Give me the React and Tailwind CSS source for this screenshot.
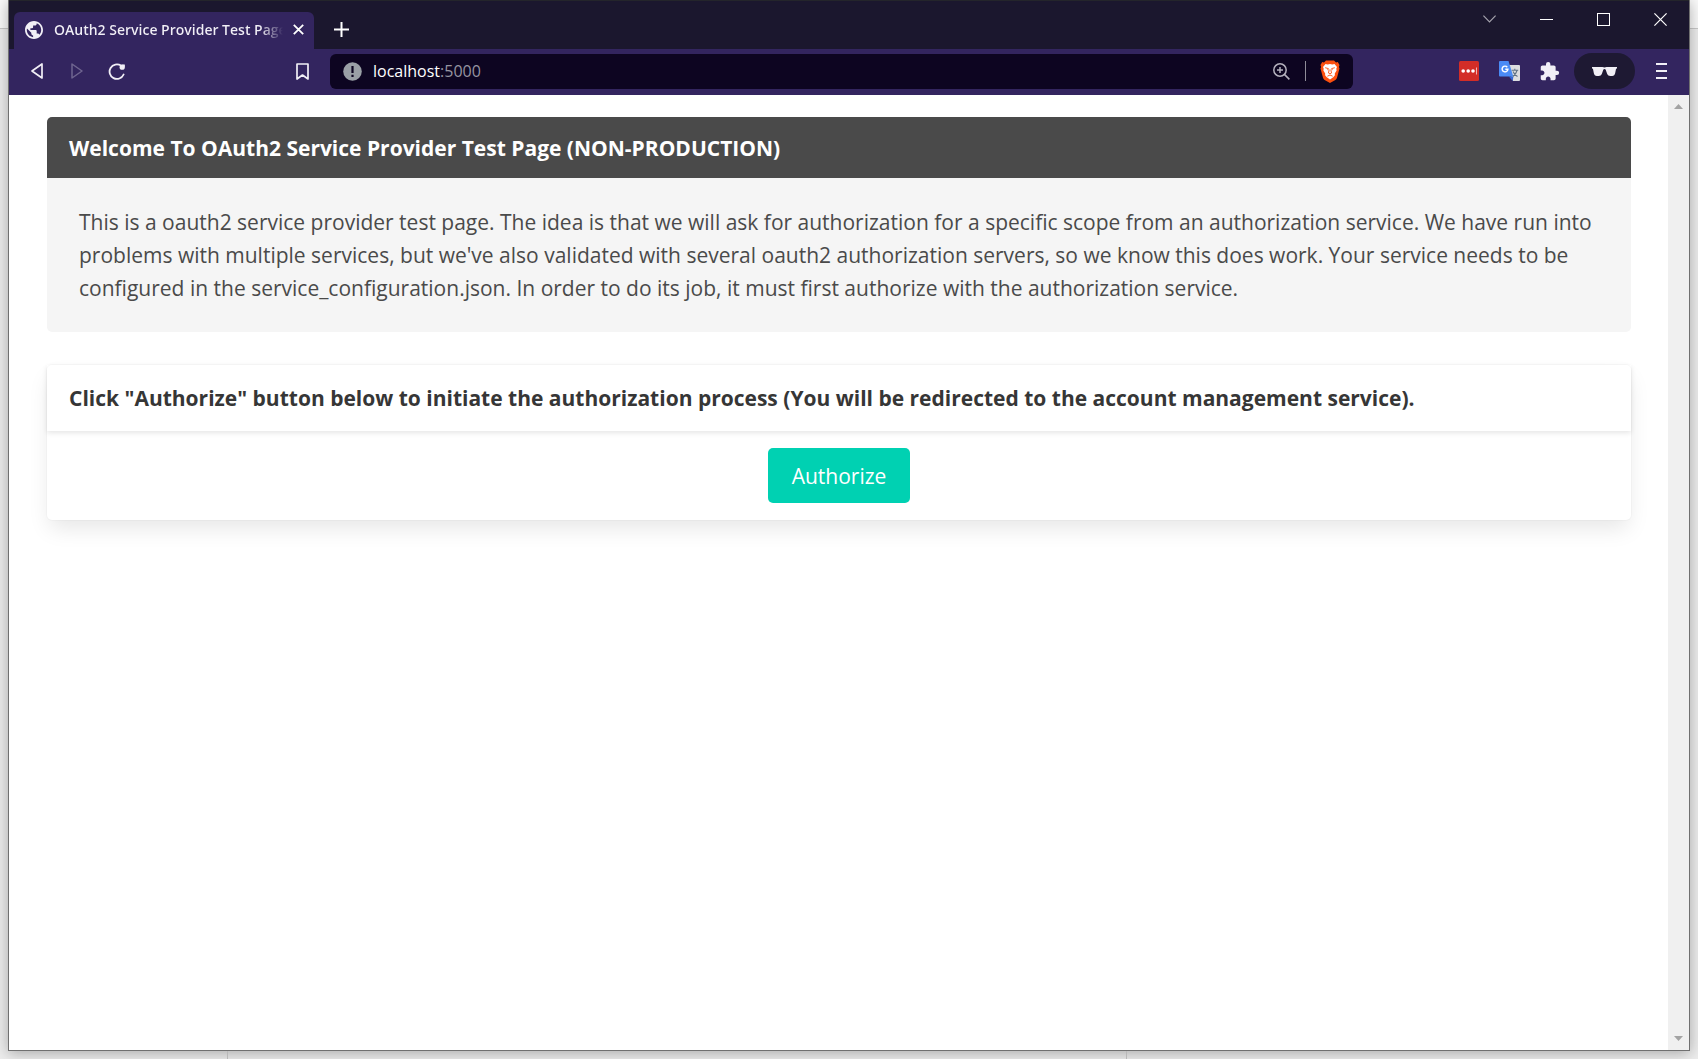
import React from "react";

function WindowButton({ label, children }) {
  return (
    <button type="button" aria-label={label} className="flex h-9 w-[57px] items-center justify-center">
      {children}
    </button>
  );
}

function TabStrip() {
  return (
    <div className="flex h-[49px] items-start justify-between border-t border-[#24252b] bg-[#1b172e] pl-[5px]">
      <div className="flex">
        <div className="mt-[11px] flex h-[37px] w-[300px] items-center rounded-t-md bg-[#33255f] pr-[6px] pb-[2px] pl-[11px]">
          <svg className="size-[18px] shrink-0" viewBox="2 2 20 20" fill="#f1eff6" aria-hidden="true">
            <path d="M12 2C6.480 2 2 6.480 2 12s4.480 10 10 10 10-4.480 10-10S17.520 2 12 2zm-1 17.930c-3.950-.49-7-3.850-7-7.930 0-.62.08-1.210.21-1.790L9 15v1c0 1.100.9 2 2 2v1.930zm6.900-2.540c-.26-.81-1-1.390-1.900-1.390h-1v-3c0-.55-.45-1-1-1H8v-2h2c.55 0 1-.45 1-1V7h2c1.100 0 2-.9 2-2v-.41c2.930 1.190 5 4.060 5 7.410 0 2.080-.8 3.970-2.100 5.390z" />
          </svg>
          <div className="ml-[11px] w-[230px] overflow-hidden bg-linear-to-r from-[#f1eff6] from-90% to-transparent bg-clip-text text-sm leading-5 font-semibold whitespace-nowrap text-transparent">
            OAuth2 Service Provider Test Page
          </div>
          <button type="button" aria-label="Close tab" className="ml-[5px] flex h-5 w-5 items-center justify-center">
            <svg className="size-[11px]" viewBox="0 0 11 11" stroke="#fff" strokeWidth="1.800" aria-hidden="true">
              <path d="M.8.8l9.400 9.400M10.200.8L.8 10.200" />
            </svg>
          </button>
        </div>
        <button type="button" aria-label="New tab" className="mt-[10px] ml-[11px] flex h-9 w-8 items-center justify-center">
          <svg className="size-[15px]" viewBox="0 0 15 15" stroke="#fff" strokeWidth="2" aria-hidden="true">
            <path d="M7.500 0v15M0 7.500h15" />
          </svg>
        </button>
      </div>
      <div className="flex">
        <WindowButton label="Search tabs">
          <svg className="h-2 w-[13px]" viewBox="0 0 13 8" fill="none" stroke="#a5a3ad" strokeWidth="1.200" aria-hidden="true">
            <path d="M.4.600l6.100 6.200L12.600.6" />
          </svg>
        </WindowButton>
        <WindowButton label="Minimize">
          <span className="h-px w-[13px] bg-white" />
        </WindowButton>
        <WindowButton label="Maximize">
          <span className="size-[13px] border border-white" />
        </WindowButton>
        <WindowButton label="Close">
          <svg className="size-[13px]" viewBox="0 0 13 13" stroke="#fff" strokeWidth="1.200" aria-hidden="true">
            <path d="M.4.4l12.200 12.200M12.600.4L.4 12.600" />
          </svg>
        </WindowButton>
      </div>
    </div>
  );
}

function ToolButton({ label, children }) {
  return (
    <button type="button" aria-label={label} className="flex h-9 w-10 items-center justify-center">
      {children}
    </button>
  );
}

function BraveIcon() {
  return (
    <svg className="h-[23px] w-5" viewBox="0 0 20 23" aria-hidden="true">
      <path d="M6 .5h8l2 2 1.800-.4L19.500 5l-.6 2 .6 1.500-2.500 9.300c-.3 1-.8 1.700-1.600 2.200L10 23l-5.400-3c-.8-.5-1.300-1.200-1.600-2.200L.5 8.500 1.100 7 .5 5l1.700-2.900L4 2.500z" fill="#fb4f0e" />
      <path d="M5.500 4l2.200.4L10 4l2.300.4 2.200-.4L17 7l-.7 1.800.3 1.700-1.800 3 .1 1.800-1.700 1.900L10 19.500l-3.200-2.300-1.700-1.900.1-1.800-1.800-3 .3-1.700L3 7z" fill="#fff" />
      <path d="M5.200 7.700l3.200.9-.8 1.500M14.800 7.700l-3.200.9.800 1.500M9.200 9.500L8.500 13l1.500.8 1.500-.8-.7-3.500M7.400 16.200l2.600-1.200 2.600 1.200" fill="none" stroke="#fb4f0e" strokeWidth=".9" />
    </svg>
  );
}

function Toolbar() {
  return (
    <div className="flex h-[46px] items-center bg-[#33255f] px-2 pb-[2px]">
      <ToolButton label="Back">
        <svg className="mr-px h-4 w-3" viewBox="0 0 12 16" fill="none" stroke="#f1eff6" strokeWidth="1.700" strokeLinejoin="round" aria-hidden="true">
          <path d="M11 1v14L1 8z" />
        </svg>
      </ToolButton>
      <ToolButton label="Forward">
        <svg className="h-4 w-3" viewBox="0 0 12 16" fill="none" stroke="#6f6590" strokeWidth="1.500" strokeLinejoin="round" aria-hidden="true">
          <path d="M1 1v14l10-7z" />
        </svg>
      </ToolButton>
      <ToolButton label="Reload">
        <svg className="h-[17px] w-[18px]" viewBox="0 0 18 17" fill="none" stroke="#f1eff6" strokeWidth="1.800" strokeLinecap="round" aria-hidden="true">
          <path d="M13 2.600A7.300 7.300 0 1 0 15.600 11.500" />
          <circle cx="14.200" cy="4.200" r="2.600" fill="#f1eff6" stroke="none" />
          <path d="M14.200 1.600h2.600v2.600z" fill="#f1eff6" stroke="none" />
        </svg>
      </ToolButton>
      <button type="button" aria-label="Bookmark this tab" className="ml-[145px] flex h-9 w-10 items-center justify-center">
        <svg className="h-[17px] w-[13px]" viewBox="0 0 13 17" fill="none" stroke="#f1eff6" strokeWidth="1.700" strokeLinejoin="round" aria-hidden="true">
          <path d="M1 1h11v15l-5.500-4L1 16z" />
        </svg>
      </button>
      <div className="ml-2 flex h-[35px] flex-1 items-center rounded-md bg-[#0d0521] px-[13px]">
        <svg className="size-[19px] shrink-0" viewBox="0 0 19 19" aria-hidden="true">
          <circle cx="9.500" cy="9.500" r="9.300" fill="#9aa0a6" />
          <path d="M8.400 4h2.200v7H8.400zM8.400 12.700h2.200v2.200H8.400z" fill="#0d0521" />
        </svg>
        <div className="relative ml-[11px] flex-1 text-base leading-6">
          <div aria-hidden="true" className="text-[#9694a0]">
            <span className="text-white">localhost</span>:5000
          </div>
          <input
            type="text"
            aria-label="Address"
            className="absolute inset-0 w-full bg-transparent outline-none"
          />
        </div>
        <button type="button" aria-label="Zoom">
          <svg className="size-[17px]" viewBox="0 0 17 17" fill="none" stroke="#b4b1bd" strokeWidth="1.500" aria-hidden="true">
            <circle cx="7" cy="7" r="6.200" />
            <path d="M11.400 11.400l5 5M4 7h6M7 4v6" />
          </svg>
        </button>
        <span className="mr-[14px] ml-[15px] h-5 w-px bg-[#8e8c98]" />
        <button type="button" aria-label="Brave Shields">
          <BraveIcon />
        </button>
      </div>
      <div className="ml-24 flex items-center">
        <ToolButton label="Password manager">
          <svg className="size-5" viewBox="0 0 20 20" aria-hidden="true">
            <rect width="20" height="20" rx="1.500" fill="#d32d27" />
            <circle cx="4.200" cy="10" r="1.800" fill="#fff" />
            <circle cx="9.200" cy="10" r="1.800" fill="#fff" />
            <circle cx="14" cy="10" r="1.800" fill="#fff" />
            <path d="M17.500 6.500v7" stroke="#f3b3b0" strokeWidth="1" />
          </svg>
        </ToolButton>
        <ToolButton label="Translate">
          <svg className="h-5 w-[21px]" viewBox="0 0 21 20" aria-hidden="true">
            <path d="M9 4h11a1 1 0 0 1 1 1v14a1 1 0 0 1-1 1h-6z" fill="#dcdde0" />
            <path d="M10 15.500h4.500L13.500 20z" fill="#3367d6" />
            <path d="M1 0h8.500l4.800 15.500H1a1 1 0 0 1-1-1V1a1 1 0 0 1 1-1z" fill="#4a8bf5" />
            <path d="M8.300 6.200A2.900 2.900 0 1 0 8.900 8.300H6.300" fill="none" stroke="#fff" strokeWidth="1.400" />
            <path d="M12.700 9.300h6.500M15.800 7.700v1.600M18 9.500c-.6 2.400-2 4.500-4.200 6M14 10.500c.8 2 2.400 3.800 4.500 5" fill="none" stroke="#5f7285" strokeWidth="1.100" />
          </svg>
        </ToolButton>
        <ToolButton label="Extensions">
          <svg className="size-[21px]" viewBox="0 0 24 24" fill="#f1eff6" aria-hidden="true">
            <path d="M20.500 11H19V7c0-1.100-.9-2-2-2h-4V3.500a2.500 2.500 0 0 0-5 0V5H4c-1.100 0-1.990.9-1.990 2v3.800H3.500c1.490 0 2.700 1.210 2.700 2.700s-1.210 2.700-2.700 2.700H2V20c0 1.100.9 2 2 2h3.800v-1.500c0-1.490 1.210-2.700 2.700-2.700s2.700 1.210 2.700 2.700V22H17c1.100 0 2-.9 2-2v-4h1.500a2.500 2.500 0 0 0 0-5z" />
          </svg>
        </ToolButton>
        <button type="button" aria-label="Private window" className="ml-[5px] flex h-9 w-[61px] items-center justify-center rounded-full bg-[#1e1933]">
          <svg className="h-[9px] w-[25px]" viewBox="0 0 25 9" fill="#f1eff6" aria-hidden="true">
            <path d="M0 0h10.500l2 .5 2-.5H25v1.200l-1 .8-.8 4C22.800 8 21.800 9 20.200 9h-1.900c-1.500 0-2.500-.7-3.100-2l-1.500-4.200c-.2-.6-.6-.8-1.200-.8s-1 .2-1.200.8L9.800 7c-.6 1.300-1.600 2-3.100 2H4.800C3.200 9 2.200 8 1.800 6L1 2 0 1.200z" />
          </svg>
        </button>
        <button type="button" aria-label="Menu" className="ml-[6px] flex h-9 w-10 flex-col items-center justify-center gap-[5px]">
          <span className="h-0.5 w-[11px] bg-[#f1eff6]" />
          <span className="h-0.5 w-[11px] bg-[#f1eff6]" />
          <span className="h-0.5 w-[11px] bg-[#f1eff6]" />
        </button>
      </div>
    </div>
  );
}

function Page() {
  return (
    <main className="flex-1 pt-[22px] pr-[37px] pl-[38px] text-[#4a4a4a]">
      <article className="overflow-hidden rounded-[5px] bg-[#f5f5f5]">
        <h1 className="bg-[#4a4a4a] px-[22px] pt-[15px] pb-[13px] text-[21px] leading-[33px] font-bold text-white">
          Welcome To OAuth2 Service Provider Test Page (NON-PRODUCTION)
        </h1>
        <p className="px-8 pt-7 pb-[27px] text-[21px] leading-[33px]">
          This is a oauth2 service provider test page. The idea is that we will ask for authorization for a specific
          scope from an authorization service. We have run into problems with multiple services, but we've also
          validated with several oauth2 authorization servers, so we know this does work. Your service needs to be
          configured in the service_configuration.json. In order to do its job, it must first authorize with the
          authorization service.
        </p>
      </article>
      <section className="mt-[33px] rounded-[5px] bg-white shadow-[0_11px_22px_-3px_rgba(10,10,10,0.1),0_0_0_1px_rgba(10,10,10,0.02)]">
        <h2 className="px-[22px] pt-[17px] pb-4 text-[21px] leading-[33px] font-bold text-[#363636] shadow-[0_2px_5px_rgba(10,10,10,0.1)]">
          Click "Authorize" button below to initiate the authorization process (You will be redirected to the account
          management service).
        </h2>
        <div className="flex justify-center py-[17px]">
          <button type="button" className="rounded-[5px] bg-[#00d1b2] px-6 pt-3 pb-[10px] text-[21px] leading-[33px] text-white">
            Authorize
          </button>
        </div>
      </section>
    </main>
  );
}

function Scrollbar() {
  return (
    <div className="flex w-[21px] flex-col items-center justify-between bg-[#f0f0f0] py-[9px]" aria-hidden="true">
      <svg className="h-[5px] w-[9px]" viewBox="0 0 9 5" fill="#a3a3a3">
        <path d="M0 5L4.500 0 9 5z" />
      </svg>
      <svg className="h-[5px] w-[9px]" viewBox="0 0 9 5" fill="#a3a3a3">
        <path d="M0 0h9L4.500 5z" />
      </svg>
    </div>
  );
}

export default function App() {
  return (
    <div className="flex h-screen flex-col overflow-hidden bg-[linear-gradient(#fafafa_28px,#c8c8c8_28px,#c8c8c8_29px,#ededed_29px)] font-['Open_Sans','Noto_Sans',sans-serif]">
      <div className="mx-2 flex flex-1 flex-col border border-t-0 border-[#707070] bg-white shadow-[0_2px_14px_rgba(0,0,0,0.3)]">
        <TabStrip />
        <Toolbar />
        <div className="flex flex-1">
          <Page />
          <Scrollbar />
        </div>
      </div>
      <div className="flex h-2 justify-between pr-[571px] pl-[227px]">
        <span className="w-px bg-[#b8b8b8]" />
        <span className="w-px bg-[#b8b8b8]" />
      </div>
    </div>
  );
}
